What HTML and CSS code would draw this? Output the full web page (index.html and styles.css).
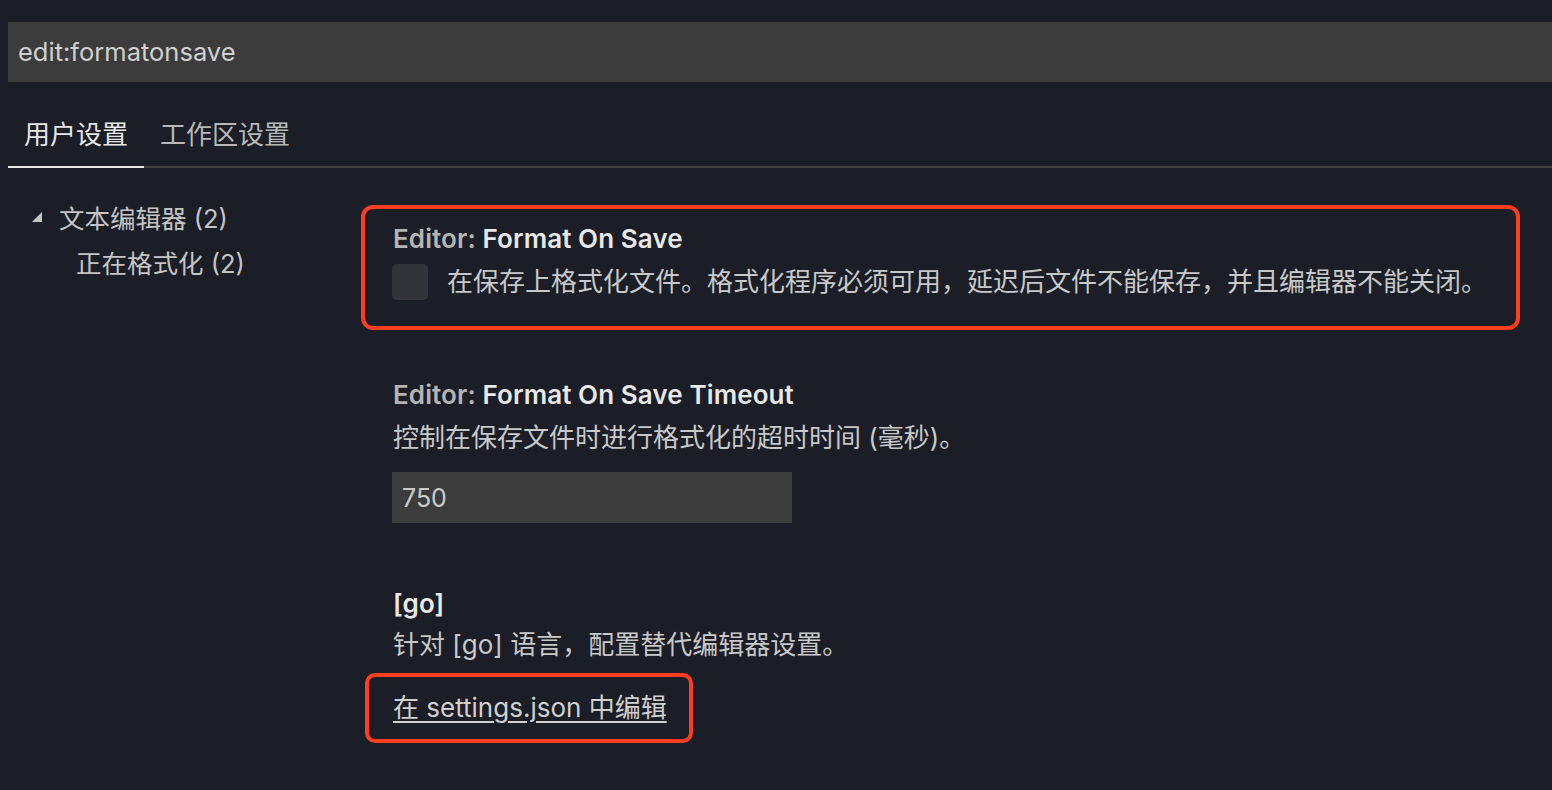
FILE: index.html
```html
<!DOCTYPE html>
<html lang="zh-CN">
<head>
<meta charset="utf-8">
<title>设置</title>
<link rel="stylesheet" href="styles.css">
</head>
<body>
<div class="search">edit:formatonsave</div>
<div class="tabs">
  <div class="tab active">用户设置</div>
  <div class="tab">工作区设置</div>
</div>
<div class="main">
  <div class="tree">
    <div class="row row-top">
      <svg class="twistie" width="10" height="10" viewBox="0 0 10 10"><polygon points="0,10 10,0 10,10"/></svg>
      <span>文本编辑器 (2)</span>
    </div>
    <div class="row row-sub">正在格式化 (2)</div>
  </div>
  <div class="settings">
    <div class="setting marked">
      <div class="title"><span class="cat">Editor: </span><span class="name">Format On Save</span></div>
      <div class="check-row">
        <span class="checkbox"></span>
        <span class="desc">在保存上格式化文件。格式化程序必须可用，延迟后文件不能保存，并且编辑器不能关闭。</span>
      </div>
    </div>
    <div class="setting s2">
      <div class="title"><span class="cat">Editor: </span><span class="name">Format On Save Timeout</span></div>
      <div class="desc line">控制在保存文件时进行格式化的超时时间 (毫秒)。</div>
      <div class="input">750</div>
    </div>
    <div class="setting s3">
      <div class="title"><span class="name">[go]</span></div>
      <div class="desc line2">针对 [go] 语言，配置替代编辑器设置。</div>
      <div class="linkbox"><a class="link" href="#">在 settings.json 中编辑</a></div>
    </div>
  </div>
</div>
</body>
</html>
```

FILE: styles.css
```css
html, body {
  margin: 0;
  padding: 0;
  background: #1b1e26;
  height: 100%;
}
body {
  font-family: Inter, "Noto Sans CJK SC", sans-serif;
  color: #c8c8c8;
  overflow: hidden;
}
.search {
  margin: 22px 0 0 8px;
  height: 60px;
  line-height: 60px;
  background: #3c3c3c;
  padding-left: 10px;
  font-size: 25.5px;
  color: #d0d0d0;
}
.tabs {
  display: flex;
  margin-left: 8px;
  border-bottom: 2px solid #414141;
}
.tab {
  padding: 33px 16px 11px;
  line-height: 40px;
  font-size: 26px;
  color: #b8b8b8;
}
.tab.active {
  color: #e8e8e8;
  border-bottom: 2px solid #e8e8e8;
  margin-bottom: -2px;
}
.main {
  display: flex;
}
.tree {
  width: 353px;
  margin-left: 8px;
  padding-top: 28px;
  font-size: 25.5px;
  color: #c5c5c5;
}
.row {
  height: 45px;
  line-height: 45px;
  display: flex;
  align-items: center;
}
.row-top {
  padding-left: 24px;
}
.twistie {
  fill: #c5c5c5;
  margin-right: 17px;
  margin-top: -4px;
}
.row-sub {
  padding-left: 68px;
}
.settings {
  width: 1159px;
  margin-top: 37px;
}
.setting {
  padding-left: 32px;
}
.setting.marked {
  border: 4px solid #ff3d1f;
  border-radius: 12px;
  padding: 12px 28px 26px;
}
.title {
  font-size: 26px;
  line-height: 36px;
  font-weight: 600;
  letter-spacing: 0.1px;
}
.cat {
  color: #b4b4b4;
  font-weight: 600;
}
.name {
  color: #e8e8e8;
}
.check-row {
  display: flex;
  align-items: center;
  margin-top: 7px;
  height: 36px;
}
.checkbox {
  width: 36px;
  height: 36px;
  border-radius: 5px;
  background: #333439;
  margin-left: -1px;
  margin-right: 19px;
  flex: none;
}
.desc {
  font-size: 26px;
  line-height: 36px;
  color: #c8c8c8;
}
.s2 {
  margin-top: 47px;
}
.line {
  margin-top: 7px;
}
.input {
  margin-top: 16px;
  margin-left: -1px;
  width: 390px;
  height: 51px;
  line-height: 53px;
  padding-left: 10px;
  background: #3c3c3c;
  font-size: 25px;
  color: #cccccc;
}
.s3 {
  margin-top: 63px;
}
.line2 {
  margin-top: 5px;
}
.linkbox {
  display: inline-block;
  margin-left: -28px;
  margin-top: 10px;
  border: 4px solid #ff3d1f;
  border-radius: 10px;
  padding: 13px 22px 13px 24px;
}
.link {
  font-size: 26px;
  line-height: 36px;
  color: #d0d0d0;
  text-decoration: underline;
  text-underline-offset: 4px;
}
```
